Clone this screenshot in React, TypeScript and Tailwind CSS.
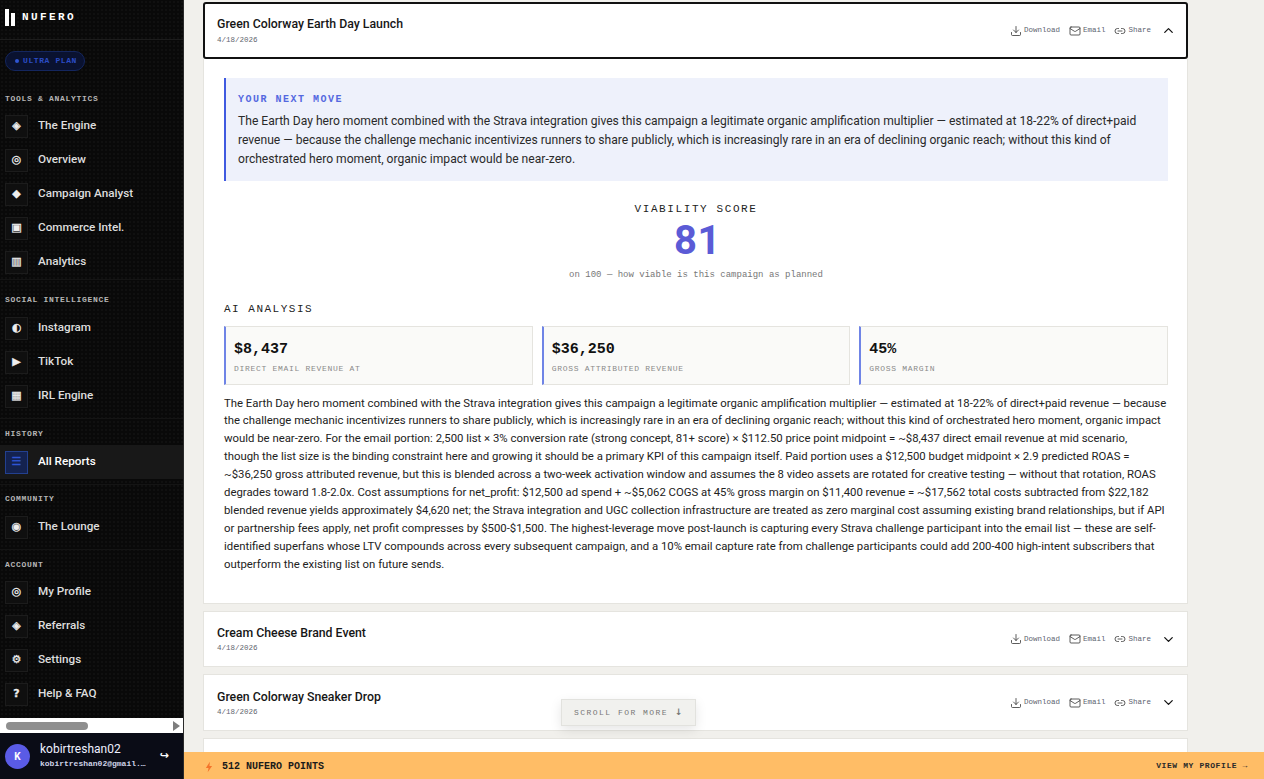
import type { ReactNode } from "react";
import { ChevronDown, ChevronUp, Download, Link2, Mail } from "lucide-react";

const sans = "font-['Roboto',sans-serif]";
const mono = "font-['Liberation_Mono',monospace]";

const groups = [
  {
    label: "TOOLS & ANALYTICS",
    box: "",
    gap: "mb-[4px]",
    items: [
      ["◈", "The Engine"],
      ["◎", "Overview"],
      ["◆", "Campaign Analyst"],
      ["▣", "Commerce Intel."],
      ["▥", "Analytics"],
    ],
  },
  {
    label: "SOCIAL INTELLIGENCE",
    box: "border-t border-[#141414] pt-[14px]",
    gap: "mb-[5px]",
    items: [
      ["◐", "Instagram"],
      ["▶", "TikTok"],
      ["▦", "IRL Engine"],
    ],
  },
  {
    label: "HISTORY",
    box: "mt-[5px] border-t border-[#141414] pt-[9px]",
    gap: "mb-[5px]",
    items: [["☰", "All Reports"]],
  },
  {
    label: "COMMUNITY",
    box: "mt-[5px] border-t border-[#141414] pt-[8px]",
    gap: "mb-[5px]",
    items: [["◉", "The Lounge"]],
  },
  {
    label: "ACCOUNT",
    box: "mt-[5px] border-t border-[#141414] pt-[9px]",
    gap: "mb-[4px]",
    items: [
      ["◎", "My Profile"],
      ["◈", "Referrals"],
      ["⚙", "Settings"],
      ["?", "Help & FAQ"],
    ],
  },
];

const callout = [
  "The Earth Day hero moment combined with the Strava integration gives this campaign a legitimate organic amplification multiplier — estimated at 18-22% of direct+paid",
  "revenue — because the challenge mechanic incentivizes runners to share publicly, which is increasingly rare in an era of declining organic reach; without this kind of",
  "orchestrated hero moment, organic impact would be near-zero.",
];

const analysis = [
  "The Earth Day hero moment combined with the Strava integration gives this campaign a legitimate organic amplification multiplier — estimated at 18-22% of direct+paid revenue — because",
  "the challenge mechanic incentivizes runners to share publicly, which is increasingly rare in an era of declining organic reach; without this kind of orchestrated hero moment, organic impact",
  "would be near-zero. For the email portion: 2,500 list × 3% conversion rate (strong concept, 81+ score) × $112.50 price point midpoint = ~$8,437 direct email revenue at mid scenario,",
  "though the list size is the binding constraint here and growing it should be a primary KPI of this campaign itself. Paid portion uses a $12,500 budget midpoint × 2.9 predicted ROAS =",
  "~$36,250 gross attributed revenue, but this is blended across a two-week activation window and assumes the 8 video assets are rotated for creative testing — without that rotation, ROAS",
  "degrades toward 1.8-2.0x. Cost assumptions for net_profit: $12,500 ad spend + ~$5,062 COGS at 45% gross margin on $11,400 revenue = ~$17,562 total costs subtracted from $22,182",
  "blended revenue yields approximately $4,620 net; the Strava integration and UGC collection infrastructure are treated as zero marginal cost assuming existing brand relationships, but if API",
  "or partnership fees apply, net profit compresses by $500-$1,500. The highest-leverage move post-launch is capturing every Strava challenge participant into the email list — these are self-",
  "identified superfans whose LTV compounds across every subsequent campaign, and a 10% email capture rate from challenge participants could add 200-400 high-intent subscribers that",
  "outperform the existing list on future sends.",
];

const stats = [
  ["$8,437", "DIRECT EMAIL REVENUE AT"],
  ["$36,250", "GROSS ATTRIBUTED REVENUE"],
  ["45%", "GROSS MARGIN"],
];

function NavRow({ icon, name }: { icon: string; name: string }) {
  const active = name === "All Reports";
  return (
    <div className={`flex h-[34px] items-center gap-[10px] pl-[5px] ${active ? "bg-[#181818]" : ""}`}>
      <span
        className={`flex h-[23px] w-[23px] items-center justify-center border font-['DejaVu_Sans',sans-serif] text-[11px] font-bold [-webkit-text-stroke:0.3px_currentColor] ${
          active ? "border-[#23408f] bg-[#14224f] text-[#2f55d4]" : "border-[#1c1c1c] bg-[#0f0f0f] text-[#eeeeee]"
        }`}
      >
        {icon}
      </span>
      <span className={`${sans} text-[11.7px] font-medium ${active ? "text-white" : "text-[#dddddd]"}`}>{name}</span>
    </div>
  );
}

function Sidebar() {
  return (
    <aside className="flex h-full w-[184px] shrink-0 flex-col border-r border-[#2a2a2a] bg-[#090909] bg-[radial-gradient(#101010_1px,transparent_1px)] bg-[size:4px_4px]">
      <div className="flex h-[40px] shrink-0 items-center gap-[7px] border-b border-[#1c1c1c] pb-[5px] pl-[5px]">
        <div className="flex h-[17px] items-end gap-[2px]">
          <div className="h-[17px] w-[4px] bg-white" />
          <div className="h-[13px] w-[4px] bg-white" />
        </div>
        <span className={`${mono} text-[11px] font-bold tracking-[2.4px] text-white`}>NUFERO</span>
      </div>
      <div className="min-h-0 flex-1 overflow-hidden">
        <div className="pl-[5px] pt-[11px]">
          <div className="flex h-[20px] w-[80px] items-center gap-[4px] rounded-full border border-[#14265e] bg-[#0a1230] pl-[9px]">
            <span className="h-[4px] w-[4px] rounded-full bg-[#2f55d4]" />
            <span className={`${mono} text-[8px] font-bold tracking-[0.6px] text-[#2a4cc4]`}>ULTRA PLAN</span>
          </div>
        </div>
        <div className="pt-[22px]">
          {groups.map((g) => (
            <div key={g.label} className={g.box}>
              <div className={`${mono} ${g.gap} h-[12px] pl-[5px] text-[8px] font-bold leading-[12px] tracking-[0.7px] text-[#b5b5b5]`}>
                {g.label}
              </div>
              {g.items.map(([icon, name]) => (
                <NavRow key={name} icon={icon} name={name} />
              ))}
            </div>
          ))}
        </div>
      </div>
      {/* fake horizontal scrollbar of the nav */}
      <div className="flex h-[15px] shrink-0 items-center justify-between bg-white pl-[6px] pr-[3px]">
        <div className="h-[8px] w-[82px] rounded-full bg-[#8f8f8f]" />
        <div className="h-0 w-0 border-y-[5px] border-l-[7px] border-y-transparent border-l-[#7d7d7d]" />
      </div>
      <div className="flex h-[46px] shrink-0 items-center gap-[10px] bg-[#0a0c16] pl-[5px] pr-[14px]">
        <div className={`${sans} flex h-[25px] w-[25px] items-center justify-center rounded-full bg-[#5a5be6] text-[10px] font-bold text-white`}>K</div>
        <div className="min-w-0 flex-1">
          <div className={`${sans} text-[12px] leading-[15px] text-[#eef0ff]`}>kobirtreshan02</div>
          <div className={`${mono} truncate text-[8px] font-bold leading-[13px] text-[#cfd3e8]`}>kobirtreshan02@gmail.c…</div>
        </div>
        <span className="font-['DejaVu_Sans',sans-serif] text-[11px] font-bold text-white">↪</span>
      </div>
    </aside>
  );
}

function Action({ icon, label }: { icon: ReactNode; label: string }) {
  return (
    <span className="flex items-center gap-[2px]">
      {icon}
      <span className={`${mono} text-[7.5px] text-[#5d6470]`}>{label}</span>
    </span>
  );
}

function ReportHeader({ title, open }: { title: string; open?: boolean }) {
  return (
    <div
      className={`flex h-[56.5px] items-center justify-between bg-white ${
        open ? "rounded-[3px] border-2 border-[#111111] pl-[12px] pr-[10px]" : "border border-[#e5e4df] pl-[13px] pr-[11px]"
      }`}
    >
      <div className={open ? "pt-[1px]" : "pt-[2px]"}>
        <div className={`${sans} text-[12.3px] font-medium leading-[17px] text-[#161616]`}>{title}</div>
        <div className={`${mono} ${open ? "mt-[2px]" : "mt-[1px]"} text-[7.5px] leading-[11px] text-[#5f6670]`}>4/18/2026</div>
      </div>
      <div className="flex items-center gap-[9px] pt-[1px]">
        <Action icon={<Download size={12} strokeWidth={1.6} className="text-[#333333]" />} label="Download" />
        <Action icon={<Mail size={12} strokeWidth={1.6} className="text-[#333333]" />} label="Email" />
        <Action icon={<Link2 size={12} strokeWidth={1.6} className="text-[#333333]" />} label="Share" />
        {open ? (
          <ChevronUp size={15} strokeWidth={2} className="mx-[0.5px] text-[#111111]" />
        ) : (
          <ChevronDown size={15} strokeWidth={2} className="mx-[0.5px] text-[#111111]" />
        )}
      </div>
    </div>
  );
}

function OpenReport() {
  return (
    <div>
      <ReportHeader title="Green Colorway Earth Day Launch" open />
      <div className="border border-t-0 border-[#e5e4df] bg-white pb-[29px] pl-[20px] pr-[19px] pt-[19px]">
        <div className="h-[103px] border-l-2 border-[#3f5ae0] bg-[#eef1fb] pl-[12px] pt-[15px]">
          <div className={`${mono} text-[10px] font-bold leading-[14px] tracking-[1.5px] text-[#5468e0]`}>YOUR NEXT MOVE</div>
          <div className={`${sans} mt-[5px] text-[12.1px] leading-[19px] text-[#2a2a2a]`}>
            {callout.map((l) => (
              <div key={l} className="whitespace-nowrap">{l}</div>
            ))}
          </div>
        </div>
        <div className="mt-[21px] text-center">
          <div className={`${mono} text-[11px] leading-[14px] tracking-[1.6px] text-[#222222]`}>VIABILITY SCORE</div>
          <div className={`${sans} mt-[3px] pl-[3px] text-[40px] font-bold leading-[44px] tracking-[0.5px] text-[#5b5bd6]`}>81</div>
          <div className={`${mono} mt-[6px] text-[9px] leading-[12px] text-[#777777]`}>on 100 — how viable is this campaign as planned</div>
        </div>
        <div className={`${mono} mt-[21px] text-[11px] leading-[14px] tracking-[1.5px] text-[#222222]`}>AI ANALYSIS</div>
        <div className="mt-[10px] grid grid-cols-3 gap-[9px]">
          {stats.map(([value, label]) => (
            <div key={label} className="h-[59px] border border-l-2 border-[#e5e4df] border-l-[#6f84e6] bg-[#fafaf8] pl-[8px] pt-[13px]">
              <div className={`${mono} text-[15px] font-bold leading-[20px] text-[#111111]`}>{value}</div>
              <div className={`${mono} mt-[3px] text-[8px] leading-[11px] tracking-[0.7px] text-[#8a8a8a]`}>{label}</div>
            </div>
          ))}
        </div>
        <div className={`${sans} mt-[10px] text-[11.35px] leading-[17.9px] text-[#222222]`}>
          {analysis.map((l) => (
            <div key={l} className="whitespace-nowrap">{l}</div>
          ))}
        </div>
      </div>
    </div>
  );
}

export default function App() {
  return (
    <div className="flex h-[779px] w-[1264px] overflow-hidden bg-[#f1f0ec]">
      <Sidebar />
      <main className="relative flex min-w-0 flex-1 flex-col">
        <div className="min-h-0 flex-1 overflow-hidden pl-[19px] pr-[76px] pt-[2px]">
          <div className="flex flex-col gap-[7px]">
            <OpenReport />
            <ReportHeader title="Cream Cheese Brand Event" />
            <ReportHeader title="Green Colorway Sneaker Drop" />
            <div className="h-[56.5px] border border-[#e5e4df] bg-white" />
          </div>
        </div>
        <div className={`absolute bottom-[53px] left-[377px] flex h-[27px] w-[135px] items-center gap-[7px] border border-[#e2e2de] bg-[#f1f1ee] pl-[12px] shadow-[0_4px_12px_rgba(0,0,0,0.1)] ${mono}`}>
          <span className="text-[8px] tracking-[1.47px] text-[#777777]">SCROLL FOR MORE</span>
          <span className="font-['DejaVu_Sans',sans-serif] text-[9px] font-bold text-[#777777]">↓</span>
        </div>
        <div className="flex h-[27px] shrink-0 items-center justify-between bg-[#ffbd66] pl-[21px] pr-[16px]">
          <div className="flex items-center gap-[9px] pt-[2px]">
            <svg width="8" height="12" viewBox="0 0 9 12" className="shrink-0">
              <path d="M5.5 0 1 7h3l-1 5 5-7H5z" fill="#f4742b" />
            </svg>
            <span className={`${mono} text-[10px] font-bold text-[#1a1a1a]`}>512 NUFERO POINTS</span>
          </div>
          <span className={`${mono} pt-[1px] text-[8px] font-bold tracking-[0.6px] text-[#2a2a2a]`}>VIEW MY PROFILE →</span>
        </div>
      </main>
    </div>
  );
}
